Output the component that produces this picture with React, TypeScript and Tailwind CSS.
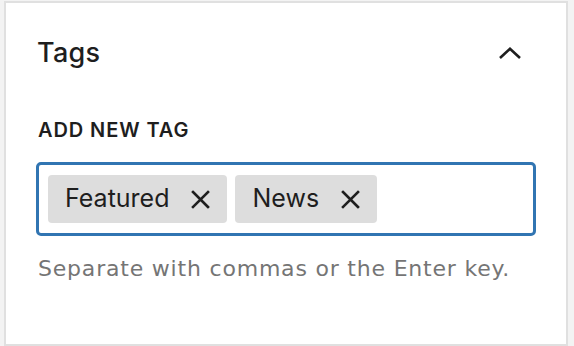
import { useState } from 'react';

const CloseIcon = () => (
    <svg width="19" height="19" viewBox="0 0 19 19" fill="none" stroke="#1e1e1e" strokeWidth="2.6" strokeLinecap="square">
        <path d="M2 2L17 17M17 2L2 17" />
    </svg>
);

const App = () => {
    const [tags] = useState(["Featured", "News"]);

    return (
        <div className="w-[574px] h-[346px] bg-[#f3f3f3] pl-[4px] pr-[6px] flex">
            <div className="flex-1 bg-white border-2 border-[#e0e0e0] mt-px flex flex-col">
                {/* Header */}
                <div className="h-[100px] shrink-0 flex items-center justify-between pl-[31px] pr-[45px]">
                    <h2 className="text-[27px] font-medium text-[#1e1e1e] font-['Inter',sans-serif] tracking-[0.3px]">Tags</h2>
                    <svg width="22" height="12" viewBox="0 0 22 12" fill="none" stroke="#1e1e1e" strokeWidth="2.6">
                        <path d="M1 11L11 1.8L21 11" />
                    </svg>
                </div>

                {/* Body */}
                <div className="px-[30px] font-['Inter',sans-serif]">
                    <label className="block text-[20px] leading-[24px] font-semibold uppercase text-[#1e1e1e] mt-[15px] pl-[2px] tracking-[0.9px]">
                        Add new tag
                    </label>
                    <div className="mt-[20px] h-[74px] border-[3px] border-[#3175b2] rounded-[5px] flex items-center gap-[8px] px-[9px]">
                        {tags.map(tag => (
                            <span key={tag} className="h-[48px] flex items-center gap-[22px] pl-[17px] pr-[17px] bg-[#dddddd] rounded-[4px] text-[25px] text-[#1e1e1e]">
                                {tag}
                                <CloseIcon />
                            </span>
                        ))}
                    </div>
                    <p className="mt-[18px] pl-[2px] text-[22px] leading-[30px] text-[#757575] font-['DejaVu_Sans',sans-serif] tracking-[0.8px]">
                        Separate with commas or the Enter key.
                    </p>
                </div>
            </div>
        </div>
    );
};

export default App;
